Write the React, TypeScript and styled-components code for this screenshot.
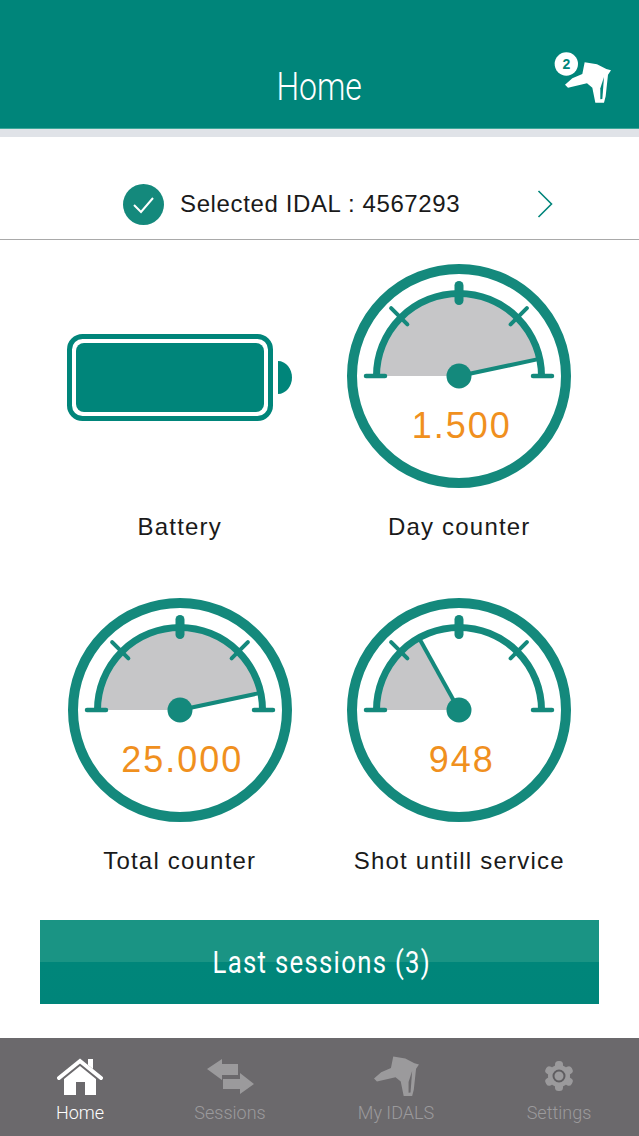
// App.tsx
import React from 'react';
import styled, { createGlobalStyle } from 'styled-components';

const TEAL = '#00857a';
const DIAL = '#14897c';

const GlobalStyle = createGlobalStyle`
  html, body {
    margin: 0;
    padding: 0;
    background: #fff;
    font-family: "Liberation Sans", Arial, sans-serif;
  }
`;

const Page = styled.div`
  width: 639px;
  height: 1136px;
  display: flex;
  flex-direction: column;
  overflow: hidden;
  background: #fff;
`;

const Header = styled.header`
  height: 129px;
  box-sizing: border-box;
  flex-shrink: 0;
  display: grid;
  grid-template-columns: 1fr auto 1fr;
  align-items: end;
  padding-bottom: 18px;
  background: ${TEAL};
  border-bottom: 1px solid #3fa79b;
`;

const Title = styled.h1`
  grid-column: 2;
  margin: 0;
  font-family: Roboto, sans-serif;
  font-size: 39px;
  font-weight: 300;
  line-height: 46px;
  color: #fff;
  transform: scaleX(0.82);
`;

const HeaderGun = styled.svg`
  grid-column: 3;
  justify-self: end;
  width: 60px;
  height: 55px;
  margin: 0 26px 6px 0;
`;

const Strip = styled.div`
  height: 8px;
  flex-shrink: 0;
  background: #e0e3e8;
`;

const SelectedRow = styled.div`
  height: 103px;
  box-sizing: border-box;
  flex-shrink: 0;
  display: flex;
  align-items: center;
  padding: 32px 0 0 123px;
  border-bottom: 1px solid #a9a9a9;
`;

const CheckBadge = styled.svg`
  width: 41px;
  height: 41px;
  flex-shrink: 0;
`;

const SelectedText = styled.span`
  margin-left: 16px;
  font-size: 24px;
  letter-spacing: 0.62px;
  color: #1a1a1a;
  white-space: nowrap;
`;

const Chevron = styled.svg`
  width: 16px;
  height: 28px;
  margin-left: 77px;
  flex-shrink: 0;
`;

const Meters = styled.div`
  display: grid;
  grid-template-columns: 1fr 1fr;
  row-gap: 57px;
  margin: 0 40px;
  padding-top: 24px;
`;

const Meter = styled.div`
  display: flex;
  flex-direction: column;
  align-items: center;
`;

const DialBox = styled.div`
  position: relative;
  width: 224px;
  height: 224px;
`;

const DialSvg = styled.svg`
  display: block;
  width: 224px;
  height: 224px;
`;

const DialValue = styled.span`
  position: absolute;
  left: 5px;
  right: 0;
  top: 141px;
  font-family: "Liberation Sans", Arial, sans-serif;
  font-size: 36px;
  line-height: 42px;
  letter-spacing: 2px;
  text-align: center;
  color: #f0901e;
`;

const BatteryBox = styled.svg`
  display: block;
  width: 227px;
  height: 224px;
`;

const MeterLabel = styled.div`
  margin-top: 25px;
  font-size: 24px;
  line-height: 28px;
  letter-spacing: 1.2px;
  color: #1a1a1a;
  white-space: nowrap;
`;

const SessionsButton = styled.button`
  display: block;
  width: 559px;
  height: 84px;
  margin: 45px 40px 0;
  padding: 0 0 0 4px;
  border: none;
  background: linear-gradient(to bottom, #1a9484 0, #1a9484 50%, #00867a 50%, #00857a 100%);
  color: #fff;
  font-family: Roboto, sans-serif;
  font-size: 32px;
  font-weight: 400;
`;

const ButtonText = styled.span`
  display: inline-block;
  letter-spacing: 1.6px;
  transform: scaleX(0.805);
  white-space: nowrap;
`;

const TabBar = styled.nav`
  margin-top: auto;
  height: 98px;
  box-sizing: border-box;
  display: grid;
  grid-template-columns: 160px 140px 192px 134px;
  padding-top: 17px;
  background: #6b696c;
`;

const Tab = styled.div<{ $active?: boolean }>`
  display: flex;
  flex-direction: column;
  align-items: center;
  color: ${(p) => (p.$active ? '#fff' : '#9b9a9c')};
`;

const TabIcon = styled.div`
  height: 42px;
  display: flex;
  align-items: center;
  justify-content: center;

  svg {
    display: block;
  }
`;

const TabLabel = styled.span`
  margin-top: 5px;
  font-family: Roboto, sans-serif;
  font-size: 18px;
  font-weight: 300;
  line-height: 22px;
`;

const polar = (r: number, deg: number) => {
  const a = (deg * Math.PI) / 180;
  return { x: 112 - r * Math.cos(a), y: 112 - r * Math.sin(a) };
};

type GaugeProps = { value: string; angle: number; label: string };

function Gauge({ value, angle, label }: GaugeProps) {
  const edge = polar(80, angle);
  const tip = polar(81, angle);
  const large = angle > 180 ? 1 : 0;
  const ticks = [45, 135].map((d) => ({ a: polar(73, d), b: polar(96, d) }));

  return (
    <Meter>
      <DialBox>
        <DialSvg viewBox="0 0 224 224">
          <circle cx="112" cy="112" r="107" fill="none" stroke={DIAL} strokeWidth="10" />
          <path
            d={`M32 112 A80 80 0 ${large} 1 ${edge.x} ${edge.y} L112 112 Z`}
            fill="#c6c6c8"
          />
          <path
            d="M29.5 112 A82.5 82.5 0 0 1 194.5 112"
            fill="none"
            stroke={DIAL}
            strokeWidth="7"
          />
          <path d="M19 112 H38 M186 112 H205" stroke={DIAL} strokeWidth="4.5" strokeLinecap="round" />
          <path d="M112 21.5 V36.5" stroke={DIAL} strokeWidth="9" strokeLinecap="round" />
          {ticks.map((t, i) => (
            <path
              key={i}
              d={`M${t.a.x} ${t.a.y} L${t.b.x} ${t.b.y}`}
              stroke={DIAL}
              strokeWidth="4"
              strokeLinecap="round"
            />
          ))}
          <path d={`M112 112 L${tip.x} ${tip.y}`} stroke={DIAL} strokeWidth="4" />
          <circle cx="112" cy="112" r="12.5" fill={DIAL} />
        </DialSvg>
        <DialValue>{value}</DialValue>
      </DialBox>
      <MeterLabel>{label}</MeterLabel>
    </Meter>
  );
}

function Battery() {
  return (
    <Meter>
      <BatteryBox viewBox="0 0 227 224">
        <rect x="3.5" y="72.5" width="201" height="82" rx="13" fill="none" stroke={TEAL} strokeWidth="5" />
        <rect x="10" y="79" width="188" height="69" rx="8" fill={TEAL} />
        <path d="M212 97 C220 97 226 105 226 113.5 C226 122 220 130 212 130 Z" fill={TEAL} />
      </BatteryBox>
      <MeterLabel>Battery</MeterLabel>
    </Meter>
  );
}

// gun outline, in a 3x coordinate space
const GunShape = ({ fill, slit }: { fill: string; slit: string }) => (
  <>
    <path
      d="M135 70 L172 76 L200 90 L214 94 L205 107 L198 172 L193 191 L167 191 L158 146 L142 133 L85 146 L76 137 L98 118 L128 105 Z"
      fill={fill}
    />
    <path d="M193 114 L188 180 L182 181 L182 148 Z" fill={slit} />
  </>
);

const HomeGlyph = () => (
  <svg width="46" height="37" viewBox="0 0 46 37">
    <path d="M2 20 L23 3 L44 20" fill="none" stroke="#fff" strokeWidth="4" strokeLinecap="round" />
    <path d="M31 1 H36 V11 L31 7 Z" fill="#fff" />
    <path d="M7 21 L23 8 L39 21 V37 H28 V24 H19 V37 H7 Z" fill="#fff" />
  </svg>
);

const SessionsGlyph = () => (
  <svg width="47" height="35" viewBox="0 0 47 35">
    <path d="M0 10 L15 0 V5 H31 V16 H15 V21 Z" fill="#9b9a9c" />
    <path d="M16 20 H33 V14 L47 25 L33 35 V30 H16 Z" fill="#9b9a9c" />
  </svg>
);

const GunGlyph = () => (
  <svg width="45" height="41" viewBox="76 70 138 122">
    <GunShape fill="#9b9a9c" slit="#6b696c" />
  </svg>
);

const GearGlyph = () => (
  <svg width="32" height="32" viewBox="0 0 32 32">
    {[0, 60, 120].map((d) => (
      <rect
        key={d}
        x="12"
        y="1"
        width="8"
        height="30"
        rx="3.5"
        fill="#9b9a9c"
        transform={`rotate(${d} 16 16)`}
      />
    ))}
    <circle cx="16" cy="16" r="11" fill="#9b9a9c" />
    <circle cx="16" cy="16" r="5.5" fill="#9b9a9c" stroke="#5f5d60" strokeWidth="2" />
  </svg>
);

function App() {
  return (
    <Page>
      <GlobalStyle />
      <Header>
        <Title>Home</Title>
        <HeaderGun viewBox="40 30 180 165">
          <GunShape fill="#fff" slit={TEAL} />
          <circle cx="80" cy="75" r="35" fill="#fff" />
          <text
            x="80"
            y="90"
            textAnchor="middle"
            fontFamily="Liberation Sans, sans-serif"
            fontWeight="700"
            fontSize="42"
            fill={TEAL}
          >
            2
          </text>
        </HeaderGun>
      </Header>
      <Strip />

      <SelectedRow>
        <CheckBadge viewBox="0 0 41 41">
          <circle cx="20.5" cy="20.5" r="20.5" fill={DIAL} />
          <path d="M11 21 L18 28 L30 14" fill="none" stroke="#fff" strokeWidth="2" />
        </CheckBadge>
        <SelectedText>Selected IDAL : 4567293</SelectedText>
        <Chevron viewBox="0 0 16 28">
          <path d="M1.5 1 L14.5 14 L1.5 27" fill="none" stroke={TEAL} strokeWidth="1.6" />
        </Chevron>
      </SelectedRow>

      <Meters>
        <Battery />
        <Gauge value="1.500" angle={168} label="Day counter" />
        <Gauge value="25.000" angle={168} label="Total counter" />
        <Gauge value="948" angle={61} label="Shot untill service" />
      </Meters>

      <SessionsButton>
        <ButtonText>Last sessions (3)</ButtonText>
      </SessionsButton>

      <TabBar>
        <Tab $active>
          <TabIcon><HomeGlyph /></TabIcon>
          <TabLabel>Home</TabLabel>
        </Tab>
        <Tab>
          <TabIcon><SessionsGlyph /></TabIcon>
          <TabLabel>Sessions</TabLabel>
        </Tab>
        <Tab>
          <TabIcon><GunGlyph /></TabIcon>
          <TabLabel>My IDALS</TabLabel>
        </Tab>
        <Tab>
          <TabIcon><GearGlyph /></TabIcon>
          <TabLabel>Settings</TabLabel>
        </Tab>
      </TabBar>
    </Page>
  );
}

export default App;
